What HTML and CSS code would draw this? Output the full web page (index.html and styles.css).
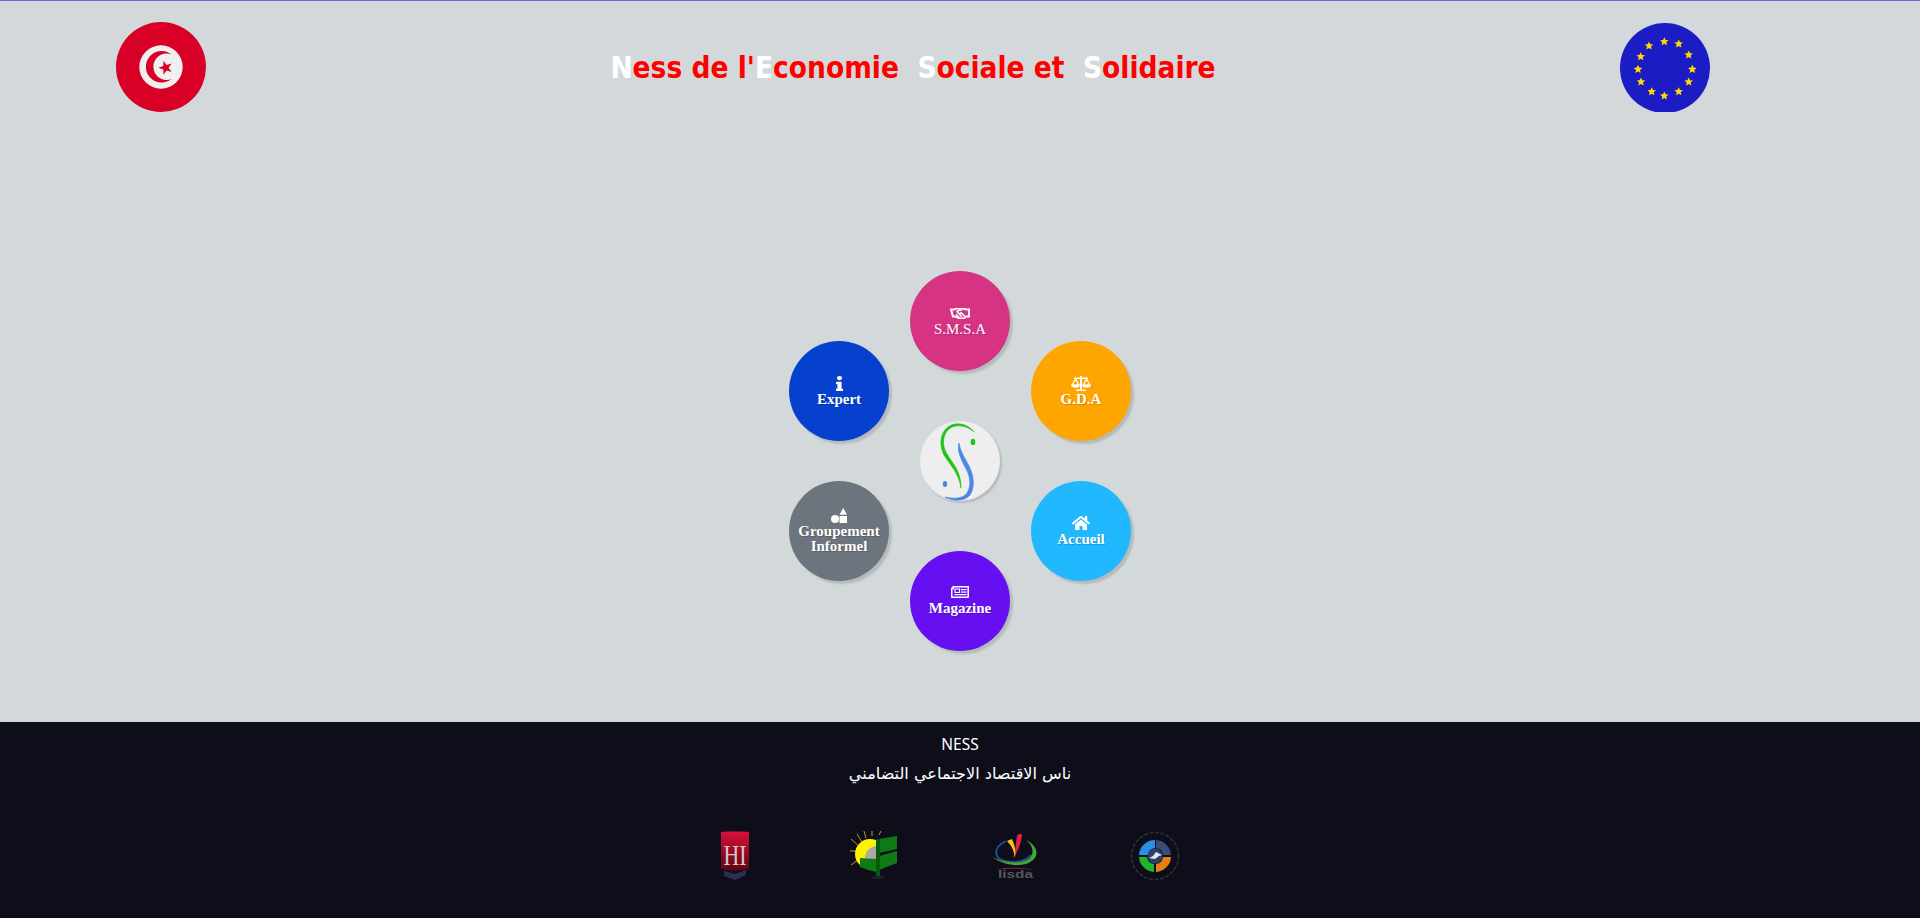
FILE: index.html
```html
<!DOCTYPE html>
<html lang="fr">

<head>
    <meta charset="UTF-8">
    <title>NESS</title>
    <link rel="stylesheet" href="styles.css">
</head>

<body>
    <div class="page">
        <header class="top">
            <!-- drapeau tunisie -->
            <svg class="flag" viewBox="0 0 90 90">
                <circle cx="45" cy="45" r="45" fill="#d80027" />
                <circle cx="45" cy="45" r="21.700" fill="#f0f0f0" />
                <path d="M55.500 32.300A15.800 15.800 0 1 0 55.500 57.100A13.300 13.300 0 1 1 55.500 32.300z" fill="#d80027" />
                <polygon transform="translate(49.700 45.700)" points="-7.300,0 -2.350,-1.700 -2.260,-6.940 .9,-2.760 5.900,-4.290 2.900,0 5.900,4.290 .9,2.760 -2.260,6.940 -2.350,1.700" fill="#d80027" />
            </svg>
            <h1 class="title"><span>N</span>ess de l'<span>E</span>conomie &nbsp;<span>S</span>ociale et &nbsp;<span>S</span>olidaire</h1>
            <!-- drapeau europe -->
            <svg class="flag" viewBox="0 0 90 90">
                <defs>
                    <path id="star" d="M0-4.500l1.300 2.800 3 .3-2.300 2 .7 3-2.700-1.500-2.700 1.500.7-3-2.300-2 3-.3z" />
                </defs>
                <circle cx="45" cy="46" r="45" fill="#1c1cc4" />
                <g fill="#ffda00">
                    <use href="#star" x="44.300" y="19.700" />
                    <use href="#star" x="58.700" y="22" />
                    <use href="#star" x="68.700" y="33" />
                    <use href="#star" x="72.300" y="47.300" />
                    <use href="#star" x="68.700" y="60" />
                    <use href="#star" x="58.700" y="69.700" />
                    <use href="#star" x="44.300" y="74" />
                    <use href="#star" x="31.700" y="69.700" />
                    <use href="#star" x="21" y="60" />
                    <use href="#star" x="18" y="47.300" />
                    <use href="#star" x="20.700" y="34.700" />
                    <use href="#star" x="29" y="24" />
                </g>
            </svg>
        </header>

        <main class="center">
            <div class="ring">
                <a href="#" class="node pink">
                    <svg class="ico ico-hand" viewBox="0 0 20 11">
                        <path d="M1 1.500h3l2-.8c1.500-.5 2.500-.2 4 .2 1.500-.4 2.500-.7 4-.2l2 .8h3v7h-3l-1.800 1.500c-1.300.8-2.500.8-3.500.3-1.300.3-2.500-.2-3.500-1l-1.500-.8h-2.700z" fill="#d63384" stroke="#fff" stroke-width="2" />
                        <path d="M6.500 4l3.500-2.300 2 .5M7.500 4.500c1 1.500 2.500 1.300 3.700.2l3.300 3.400M6 6.500l3.500 3M9 5.800l3 3" fill="none" stroke="#fff" stroke-width="1.500" />
                    </svg>
                    <span>S.M.S.A</span>
                </a>
                <a href="#" class="node orange">
                    <svg class="ico ico-scale" viewBox="0 0 20 15">
                        <path d="M9 0h2v13.500h4v1.500h-10v-1.500h4zM3 1.500h14v1.500h-14z" fill="#fff" />
                        <path d="M4.500 3l-3.300 6h6.600zM15.500 3l-3.300 6h6.600z" fill="none" stroke="#fff" stroke-width="1.200" />
                        <path d="M0 8.700h9c0 2-2 3-4.500 3s-4.500-1-4.500-3zM11 8.700h9c0 2-2 3-4.500 3s-4.500-1-4.500-3z" fill="#fff" />
                    </svg>
                    <span>G.D.A</span>
                </a>
                <a href="#" class="node sky">
                    <svg class="ico ico-home" viewBox="0 0 576 512">
                        <path d="M280.370 148.260L96 300.110V464a16 16 0 0 0 16 16l112.060-.29a16 16 0 0 0 15.920-16V368a16 16 0 0 1 16-16h64a16 16 0 0 1 16 16v95.640a16 16 0 0 0 16 16.050L464 480a16 16 0 0 0 16-16V300L295.670 148.260a12.190 12.190 0 0 0-15.300 0zM571.600 251.470L488 182.560V44.050a12 12 0 0 0-12-12h-56a12 12 0 0 0-12 12v72.610L318.470 43a48 48 0 0 0-61 0L4.340 251.470a12 12 0 0 0-1.600 16.900l25.500 31A12 12 0 0 0 45.150 301l235.220-193.740a12.190 12.190 0 0 1 15.300 0L530.900 301a12 12 0 0 0 16.900-1.600l25.500-31a12 12 0 0 0-1.700-16.930z" fill="#fff" />
                    </svg>
                    <span>Accueil</span>
                </a>
                <a href="#" class="node violet">
                    <svg class="ico ico-news" viewBox="0 0 18 12">
                        <path d="M2.200.8h15v9.700a.8.800 0 0 1-.8.800h-15a.8.800 0 0 1-.7-.8v-8h1.500z" fill="#6610f2" stroke="#fff" stroke-width="1.600" />
                        <path d="M4 3h4.500v3.500h-4.500z" fill="none" stroke="#fff" stroke-width="1.200" />
                        <path d="M10 3h5.500v1.200h-5.500zM10 5.500h5.500v1.200h-5.500zM3.500 8h12v1.200h-12z" fill="#fff" />
                    </svg>
                    <span>Magazine</span>
                </a>
                <a href="#" class="node grey">
                    <svg class="ico ico-shapes" viewBox="0 0 16 15">
                        <path d="M12.200 0l3.800 6.700h-7.500z" fill="#fff" />
                        <circle cx="4" cy="11" r="4" fill="#fff" />
                        <rect x="8.500" y="8" width="7.500" height="7" fill="#fff" />
                    </svg>
                    <span>Groupement Informel</span>
                </a>
                <a href="#" class="node blue">
                    <svg class="ico ico-info" viewBox="0 0 192 512" preserveAspectRatio="none">
                        <path d="M20 424.229h20V279.771H20c-11.046 0-20-8.954-20-20V212c0-11.046 8.954-20 20-20h112c11.046 0 20 8.954 20 20v212.229h20c11.046 0 20 8.954 20 20V492c0 11.046-8.954 20-20 20H20c-11.046 0-20-8.954-20-20v-47.771c0-11.046 8.954-20 20-20zM96 0C56.235 0 24 32.235 24 72s32.235 72 72 72 72-32.235 72-72S135.764 0 96 0z" fill="#fff" />
                    </svg>
                    <span>Expert</span>
                </a>

                <!-- logo du milieu -->
                <div class="hub">
                    <svg viewBox="0 0 80 80">
                        <path d="M54 11C48 5 36 2 29 8 22 14 22 25 27 33 33 43 41 50 41 67 39 52 30 44 24 34 19 24 20 12 28 6 36 0 48 3 54 11z" fill="#22c414" stroke="#22c414" stroke-width=".7" />
                        <path d="M39 22C40 30 45 37 49 45 54 55 55 66 50 74 44 81 33 80 25 76 33 78 43 78 47 72 52 64 50 54 45 46 41 38 37 30 39 22z" fill="#4a86e8" stroke="#4a86e8" stroke-width=".7" />
                        <ellipse cx="53" cy="21" rx="2.300" ry="3.200" fill="#22c414" />
                        <ellipse cx="25" cy="63" rx="2.200" ry="3" fill="#4a86e8" />
                    </svg>
                </div>
            </div>
        </main>

        <footer class="foot">
            <p class="foot-name">NESS</p>
            <p class="foot-ar" dir="rtl" lang="ar">ناس الاقتصاد الاجتماعي التضامني</p>
            <div class="partners">
                <svg class="partner" viewBox="0 0 50 50">
                    <defs>
                        <linearGradient id="redg" x1="0" y1="0" x2="0" y2="1">
                            <stop offset="0" stop-color="#d8103a" />
                            <stop offset="1" stop-color="#5c0510" />
                        </linearGradient>
                    </defs>
                    <path d="M11 1c9-.6 19-.6 28 0v37l-14 2-14-2z" fill="url(#redg)" />
                    <text class="hi" x="25" y="34" textLength="23" lengthAdjust="spacingAndGlyphs">HI</text>
                    <path d="M14 40l11 3 11-4v5l-11 5-11-4z" fill="#2c3050" />
                </svg>
                <svg class="partner" viewBox="0 0 50 50">
                    <path d="M1 8l9 8M0 20h6M1 34l8-6M7 3l5 8M14 0l2 7M22 0v5M31 0l-3 6" stroke="#a9a23a" stroke-width="1" />
                    <circle cx="20" cy="23" r="15" fill="#fff200" />
                    <rect x="28" y="4" width="22" height="40" fill="#0e0e1b" />
                    <path d="M27 15a12 12 0 0 0-12 12l12 2z" fill="#aaa" />
                    <path d="M10 27c6 0 11 1 17 1v13c-6-1-12-3-17-5z" fill="#0e7a14" />
                    <path d="M29 8l18-3v13l-18 4zM29 25l18-5v12l-18 7z" fill="#0e7a14" />
                    <rect x="26" y="8" width="4" height="37" fill="#075a0c" />
                    <text class="tiny" x="28" y="48">oooo</text>
                </svg>
                <svg class="partner" viewBox="0 0 50 50">
                    <path d="M23 27C26 18 26 10 27 5c2-3 5-3 5 0C31 12 28 21 23 27z" fill="#e02040" />
                    <path d="M25 27C24 20 22 15 17 10l5-2c3 6 4 13 3 19z" fill="#f5c518" />
                    <path d="M16 10C2 17 2 30 22 31 30 31 38 28 41 24" fill="none" stroke="#1f4e9e" stroke-width="1.800" />
                    <path d="M36 9C50 16 50 28 36 33 25 36 12 33 2 26 12 31 25 33 34 30 44 27 46 17 36 9z" fill="#46a534" />
                    <path d="M6 39c10-3 25-3 37 0-12-2-25-2-37 0z" fill="#c8203a" />
                    <text class="lisda" x="25.500" y="47" textLength="35" lengthAdjust="spacingAndGlyphs">lisda</text>
                </svg>
                <svg class="partner" viewBox="0 0 50 50">
                    <circle cx="25" cy="25" r="23.500" fill="none" stroke="#2e3038" stroke-width="1.500" stroke-dasharray="4 1.500" />
                    <path d="M25 9a16 16 0 0 0-16 15h9a8 8 0 0 1 7-7z" fill="#2b8fe6" />
                    <path d="M9 26a16 16 0 0 0 15 15v-8a8 8 0 0 1-7-7z" fill="#1fb52c" />
                    <path d="M26 41a16 16 0 0 0 15-15h-8a8 8 0 0 1-7 7z" fill="#e87f14" />
                    <path d="M26 9a16 16 0 0 1 15 15h-8a8 8 0 0 0-7-7z" fill="#3a4c78" />
                    <circle cx="25" cy="25" r="7.500" fill="#2c3f70" />
                    <path d="M19 27l4-2 3-4 4 2 2 1-3 1-4 3z" fill="#e6e6ee" />
                </svg>
            </div>
        </footer>
    </div>
</body>

</html>
```

FILE: styles.css
```css
* {
    padding: 0;
    margin: 0;
    box-sizing: border-box;
}

body {
    background: #d3d9db;
    font-family: "Liberation Serif", serif;
}

.page {
    display: flex;
    flex-direction: column;
    height: 100vh;
    border-top: 1px solid #6a6ac8;
    overflow: hidden;
}

.top {
    display: flex;
    justify-content: space-between;
    align-items: center;
    padding: 21px 210px 0 116px;
}

.flag {
    display: block;
    width: 90px;
    height: 90px;
}

.title {
    color: #f00;
    font-family: "DejaVu Sans", sans-serif;
    font-stretch: condensed;
    font-size: 29.500px;
    line-height: 36px;
    font-weight: 700;
    white-space: nowrap;
    padding-top: 2px;
}

.title span {
    color: #fff;
}

.center {
    flex: 1;
    display: flex;
    justify-content: center;
    padding-top: 159px;
}

.ring {
    position: relative;
    width: 342px;
    height: 380px;
}

.node {
    position: absolute;
    display: flex;
    flex-direction: column;
    align-items: center;
    justify-content: center;
    width: 100px;
    height: 100px;
    border-radius: 50%;
    box-shadow: 3px 3px 2px #b5babd;
    color: #fff;
    font-size: 15px;
    font-weight: 700;
    line-height: 15px;
    text-align: center;
    text-decoration: none;
    text-shadow: 1px 1px 1px rgba(0, 0, 0, .2);
    padding: 0 8px;
}

.ico {
    display: block;
    margin-bottom: 1px;
}

.ico-hand {
    width: 20px;
    height: 11px;
    margin-bottom: 3px;
}

.ico-scale {
    width: 20px;
    height: 15px;
}

.ico-home {
    width: 18px;
    height: 16px;
}

.ico-news {
    width: 18px;
    height: 12px;
    margin-bottom: 3px;
}

.ico-shapes {
    width: 16px;
    height: 15px;
}

.ico-info {
    width: 7px;
    height: 15px;
}

.pink {
    left: 121px;
    top: 0;
    background: #d63384;
    font-weight: 400;
    padding-top: 2px;
}

.orange {
    left: 242px;
    top: 70px;
    background: #ffa500;
}

.sky {
    left: 242px;
    top: 210px;
    background: #22b8ff;
}

.violet {
    left: 121px;
    top: 280px;
    background: #6610f2;
}

.grey {
    left: 0;
    top: 210px;
    background: #6c757d;
}

.blue {
    left: 0;
    top: 70px;
    background: #0540cf;
}

.hub {
    position: absolute;
    left: 131px;
    top: 150px;
    width: 80px;
    height: 80px;
    border-radius: 50%;
    background: #eee;
    box-shadow: 2px 2px 2px #b5babd;
}

.hub svg {
    display: block;
}

.foot {
    height: 196px;
    background: #0e0e1b;
    color: #fff;
    text-align: center;
    font-family: "Noto Sans", "DejaVu Sans", sans-serif;
    font-size: 15.500px;
}

.foot-name {
    padding-top: 10px;
    line-height: 24px;
}

.foot-ar {
    line-height: 24px;
    margin-top: 6px;
    font-family: "DejaVu Sans", sans-serif;
    font-size: 16.100px;
}

.partners {
    display: flex;
    justify-content: center;
    padding: 45px 30px 0 0;
}

.partner {
    display: block;
    width: 50px;
    height: 50px;
    margin: 0 45px;
    overflow: visible;
}

.hi {
    fill: #d9c8c8;
    font-family: "Liberation Serif", serif;
    font-size: 30px;
    text-anchor: middle;
}

.tiny {
    fill: #3a3c44;
    font-family: "Liberation Sans", sans-serif;
    font-size: 5px;
    text-anchor: middle;
}

.lisda {
    fill: #55565e;
    font-family: "Liberation Sans", sans-serif;
    font-size: 11px;
    font-weight: 700;
    text-anchor: middle;
}
```
